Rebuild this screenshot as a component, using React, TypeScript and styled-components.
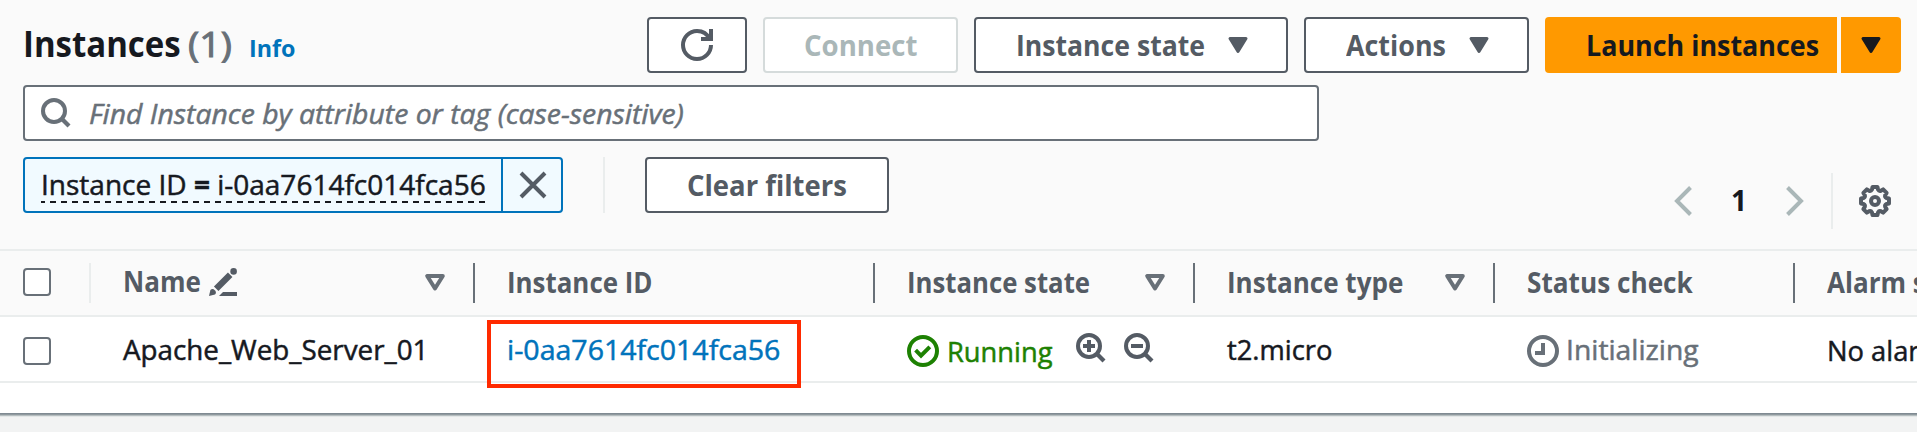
import React from "react";
import styled, { createGlobalStyle } from "styled-components";

const Global = createGlobalStyle`
  *, *::before, *::after { box-sizing: border-box; }
  body {
    margin: 0;
    background: #f2f3f3;
    color: #16191f;
    font-family: "Open Sans", "Noto Sans", sans-serif;
    overflow: hidden;
  }
`;

const Panel = styled.section`
  height: 413px;
  background: #fff;
  overflow: hidden;
`;

const PanelEdge = styled.div`
  height: 4px;
  background: linear-gradient(#7f8a92 0 1px, #8f999e 1px 2px, #b5bdbf 2px 3px, #e2e6e6 3px 4px);
`;

const Header = styled.header`
  height: 249px;
  padding: 17px 16px 0 23px;
  background: #fafafa;
`;

/* Text drawn with a narrower or wider set width than the base face. */
const Text = styled.span<{ $fit?: number; $size?: number; $bold?: boolean; $color?: string; $italic?: boolean; $stroke?: number }>`
  display: block;
  flex: none;
  font-size: ${(p) => p.$size ?? 28}px;
  line-height: 36px;
  font-weight: ${(p) => (p.$bold ? 700 : 400)};
  font-style: ${(p) => (p.$italic ? "italic" : "normal")};
  color: ${(p) => p.$color ?? "inherit"};
  -webkit-text-stroke: ${(p) => p.$stroke ?? (p.$bold ? 0 : 0.5)}px currentColor;
  white-space: nowrap;
  transform: scaleX(${(p) => p.$fit ?? 1});
  transform-origin: left center;
`;

const Strong = styled.b`
  font-weight: 700;
`;

const TitleBar = styled.div`
  display: flex;
  justify-content: space-between;
  height: 56px;
`;

const Title = styled.h2`
  display: flex;
  align-items: baseline;
  margin: 9px 0 0;
  font-weight: 400;
`;

const TitlePart = styled.div<{ $width: number }>`
  width: ${(p) => p.$width}px;
`;

const Actions = styled.div`
  display: flex;
  gap: 16px;
`;

const Button = styled.button<{ $width: number; $disabled?: boolean; $pad?: number; $left?: number }>`
  display: flex;
  align-items: center;
  justify-content: space-between;
  width: ${(p) => p.$width}px;
  height: 56px;
  padding: 0 ${(p) => p.$pad ?? 38}px 1px ${(p) => p.$left ?? p.$pad ?? 39}px;
  border: 2px solid ${(p) => (p.$disabled ? "#d5dbdb" : "#545b64")};
  border-radius: 4px;
  background: #fff;
  color: ${(p) => (p.$disabled ? "#aab7b8" : "#545b64")};
  font-family: inherit;
`;

const SplitButton = styled.div`
  display: flex;
  gap: 4px;
`;

const PrimaryButton = styled.button<{ $width: number; $side: "left" | "right" }>`
  display: flex;
  align-items: center;
  width: ${(p) => p.$width}px;
  height: 56px;
  padding: 0 0 1px ${(p) => (p.$side === "left" ? 41 : 20)}px;
  border: 0;
  border-radius: ${(p) => (p.$side === "left" ? "4px 0 0 4px" : "0 4px 4px 0")};
  background: #ff9900;
  color: #16191f;
  font-family: inherit;
`;

const SearchBox = styled.div`
  display: flex;
  align-items: center;
  gap: 18px;
  width: 1296px;
  height: 56px;
  margin-top: 12px;
  padding: 0 16px 0 16px;
  border: 2px solid #687078;
  border-radius: 4px;
  background: #fff;
  color: #687078;
`;

const FilterRow = styled.div`
  display: flex;
  margin-top: 16px;
`;

const Token = styled.div`
  display: flex;
  width: 540px;
  height: 56px;
  border: 2px solid #0073bb;
  border-radius: 4px;
  background: #f1faff;
`;

const TokenLabel = styled.div`
  width: 476px;
  padding: 7px 0 0 16px;
`;

const TokenUnderline = styled.div`
  width: 444px;
  height: 37px;
  background: repeating-linear-gradient(90deg, #16191f 0 4px, transparent 4px 9px, #16191f 9px 11px) bottom / 100% 2px no-repeat;
`;

const TokenRemove = styled.div`
  display: flex;
  align-items: center;
  justify-content: center;
  flex: 1;
  padding-left: 2px;
  border-left: 2px solid #0073bb;
  color: #545b64;
`;

const Rule = styled.div<{ $left: number; $right: number }>`
  width: 2px;
  height: 56px;
  margin: 0 ${(p) => p.$right}px 0 ${(p) => p.$left}px;
  background: #eaeded;
`;

const Pagination = styled.div`
  display: flex;
  align-items: center;
  height: 56px;
  margin: 16px 10px 0 auto;
  color: #aab7b8;
`;

const PageNumber = styled.div`
  width: 94px;
  padding: 0 0 2px 39px;
`;

const Row = styled.div<{ $head?: boolean }>`
  display: grid;
  grid-template-columns: 91px 384px 400px 320px 300px 300px 300px;
  height: ${(p) => (p.$head ? 68 : 66)}px;
  border-top: ${(p) => (p.$head ? 2 : 0)}px solid #eaeded;
  border-bottom: 2px solid #eaeded;
  background: ${(p) => (p.$head ? "#fafafa" : "#fff")};
  color: ${(p) => (p.$head ? "#545b64" : "#16191f")};
`;

const Cell = styled.div<{ $pad?: number; $down?: number; $gap?: number }>`
  display: flex;
  align-items: center;
  gap: ${(p) => p.$gap ?? 0}px;
  padding: ${(p) => p.$down ?? 0}px 0 0 ${(p) => p.$pad ?? 32}px;
  min-width: 0;
`;

const HeadCell = styled(Cell)<{ $line?: string }>`
  justify-content: space-between;
  height: 40px;
  margin-top: 12px;
  padding-right: 28px;
  padding-bottom: 2px;
  border-right: 2px solid ${(p) => p.$line ?? "#687078"};
`;

const NameHeading = styled.div`
  display: flex;
  align-items: center;
  height: 38px;
`;

const NameLabel = styled.div`
  width: 86px;
  margin-top: -3px;
`;

const Checkbox = styled.div`
  width: 28px;
  height: 28px;
  flex: none;
  border: 2px solid #687078;
  border-radius: 4px;
  background: #fff;
`;

const StatusLabel = styled.div<{ $width: number; $top?: number }>`
  width: ${(p) => p.$width}px;
  margin-top: ${(p) => p.$top ?? 0}px;
`;

const LinkCell = styled(Cell)`
  position: relative;
`;

const Highlight = styled.div`
  position: absolute;
  left: 12px;
  top: 3px;
  width: 314px;
  height: 68px;
  border: 4px solid #ff2a00;
  z-index: 1;
`;

const Svg = styled.svg`
  display: block;
  flex: none;
  overflow: visible;
`;

const ZoomIcon = styled.span`
  display: block;
  color: #545b64;
`;

const SortIcon = styled.span`
  color: #687078;
`;

const Caret = () => (
  <Svg width="20" height="16" viewBox="0 0 20 16">
    <path d="M2 1.5h16L10 14.5z" fill="currentColor" stroke="currentColor" strokeWidth="3" strokeLinejoin="round" />
  </Svg>
);

const SortCaret = () => (
  <SortIcon>
    <Svg width="20" height="17" viewBox="0 0 20 17">
      <path d="M2.2 2h15.6L10 14.5z" fill="none" stroke="currentColor" strokeWidth="4" strokeLinejoin="round" />
    </Svg>
  </SortIcon>
);

const Refresh = () => (
  <Svg width="32" height="32" viewBox="0 0 16 16" fill="none" stroke="currentColor" strokeWidth="2">
    <path d="M10 5h5V0" />
    <path d="M15 8a7 7 0 0 1-7 7 7 7 0 0 1-7-7 7 7 0 0 1 7-7 6.9 6.9 0 0 1 6.3 4" />
  </Svg>
);

const Lens = ({ sign }: { sign?: "plus" | "minus" }) => (
  <Svg width="30" height="30" viewBox="0 0 30 30" fill="none" stroke="currentColor" strokeWidth="4">
    <circle cx="13" cy="13" r="11" />
    <path d="M20.5 20.5L28 28" strokeWidth="4.2" />
    {sign && <path d={sign === "plus" ? "M7 13h12M13 7v12" : "M7 13h12"} />}
  </Svg>
);

const Close = () => (
  <Svg width="28" height="28" viewBox="0 0 28 28" fill="none" stroke="currentColor" strokeWidth="4">
    <path d="M2 2l24 24M26 2L2 26" />
  </Svg>
);

const Chevron = ({ dir }: { dir: "left" | "right" }) => (
  <Svg width="18" height="30" viewBox="0 0 18 30" fill="none" stroke="currentColor" strokeWidth="4">
    <path d={dir === "left" ? "M16.5 1.5L3 15l13.5 13.5" : "M1.5 1.5L15 15 1.5 28.5"} />
  </Svg>
);

const gearPoint = (deg: number, r: number) => {
  const a = (deg * Math.PI) / 180;
  return `${(16 + r * Math.sin(a)).toFixed(2)} ${(16 - r * Math.cos(a)).toFixed(2)}`;
};

const gearPath =
  "M" +
  Array.from({ length: 8 }, (_, i) => {
    const c = i * 45;
    return `${gearPoint(c - 10, 14.2)}L${gearPoint(c + 10, 14.2)}L${gearPoint(c + 15, 11.8)}Q${gearPoint(c + 22.5, 10.4)} ${gearPoint(c + 30, 11.8)}`;
  }).join("L") +
  "Z";

const Gear = () => (
  <Svg width="32" height="32" viewBox="0 0 32 32" fill="none" stroke="#545b64" strokeWidth="4" strokeLinejoin="round">
    <path d={gearPath} />
    <circle cx="16" cy="16" r="4" />
  </Svg>
);

const Pencil = () => (
  <Svg width="28" height="28" viewBox="0 0 28 28" fill="currentColor">
    <circle cx="24.6" cy="3.4" r="3.3" />
    <path d="M7.2 20.8L21.2 6.8" stroke="currentColor" strokeWidth="6.4" />
    <path d="M0 28l1.4-6q2.2-2 4.4.2t.2 4.4z" />
    <path d="M10 28l4-4h14v4z" />
  </Svg>
);

const CheckCircle = () => (
  <Svg width="32" height="32" viewBox="0 0 16 16" fill="none" stroke="#1d8102" strokeWidth="2">
    <circle cx="8" cy="8" r="7" />
    <path d="M4.3 7.6L7 10.3 11.4 5.9" />
  </Svg>
);

const Clock = () => (
  <Svg width="32" height="32" viewBox="0 0 16 16" fill="none" stroke="#687078" strokeWidth="2">
    <circle cx="8" cy="8" r="7" />
    <path d="M8 4v5H4" />
  </Svg>
);

export default function App() {
  return (
    <>
      <Global />
      <Panel>
        <Header>
          <TitleBar>
            <Title>
              <TitlePart $width={165}>
                <Text $bold $size={35} $fit={0.942}>Instances</Text>
              </TitlePart>
              <TitlePart $width={61}>
                <Text $size={35} $fit={1.08} $stroke={1} $color="#687078">(1)</Text>
              </TitlePart>
              <TitlePart $width={50}>
                <Text $bold $size={24} $fit={0.97} $color="#0073bb">Info</Text>
              </TitlePart>
            </Title>
            <Actions>
              <Button $width={100} $pad={32}><Refresh /></Button>
              <Button $width={195} $disabled>
                <Text $bold $fit={0.985}>Connect</Text>
              </Button>
              <Button $width={314} $left={40}>
                <Text $bold $fit={0.95}>Instance state</Text>
                <Caret />
              </Button>
              <Button $width={225} $left={40}>
                <Text $bold $fit={0.96}>Actions</Text>
                <Caret />
              </Button>
              <SplitButton>
                <PrimaryButton $width={292} $side="left">
                  <Text $bold $fit={0.96}>Launch instances</Text>
                </PrimaryButton>
                <PrimaryButton $width={60} $side="right"><Caret /></PrimaryButton>
              </SplitButton>
            </Actions>
          </TitleBar>
          <SearchBox>
            <Lens />
            <Text $italic $fit={1.013}>Find Instance by attribute or tag (case-sensitive)</Text>
          </SearchBox>
          <FilterRow>
            <Token>
              <TokenLabel>
                <TokenUnderline>
                  <Text $fit={1}>Instance ID <Strong>=</Strong> i-0aa7614fc014fca56</Text>
                </TokenUnderline>
              </TokenLabel>
              <TokenRemove><Close /></TokenRemove>
            </Token>
            <Rule $left={40} $right={40} />
            <Button $width={244} $pad={40}>
              <Text $bold $fit={0.98}>Clear filters</Text>
            </Button>
            <Pagination>
              <Chevron dir="left" />
              <PageNumber>
                <Text $bold $color="#16191f">1</Text>
              </PageNumber>
              <Chevron dir="right" />
              <Rule $left={27} $right={26} />
              <Gear />
            </Pagination>
          </FilterRow>
        </Header>
        <Row $head>
          <HeadCell $pad={23} $line="#eaeded"><Checkbox /></HeadCell>
          <HeadCell $pad={32}>
            <NameHeading>
              <NameLabel><Text $bold $fit={0.93}>Name</Text></NameLabel>
              <Pencil />
            </NameHeading>
            <SortCaret />
          </HeadCell>
          <HeadCell $pad={32}><Text $bold $fit={0.925}>Instance ID</Text></HeadCell>
          <HeadCell $pad={32}>
            <Text $bold $fit={0.92}>Instance state</Text>
            <SortCaret />
          </HeadCell>
          <HeadCell $pad={32}>
            <Text $bold $fit={0.93}>Instance type</Text>
            <SortCaret />
          </HeadCell>
          <HeadCell $pad={32}><Text $bold $fit={0.935}>Status check</Text></HeadCell>
          <HeadCell $pad={32}><Text $bold $fit={0.93}>Alarm status</Text></HeadCell>
        </Row>
        <Row>
          <Cell $pad={23} $down={4}><Checkbox /></Cell>
          <Cell $pad={32}><Text $fit={0.992}>Apache_Web_Server_01</Text></Cell>
          <LinkCell $pad={32}>
            <Highlight />
            <Text $fit={1.018} $color="#0073bb">i-0aa7614fc014fca56</Text>
          </LinkCell>
          <Cell $pad={32} $down={3} $gap={8}>
            <CheckCircle />
            <StatusLabel $width={121}><Text $fit={0.975} $color="#1d8102">Running</Text></StatusLabel>
            <StatusLabel $width={40} $top={-5}><ZoomIcon><Lens sign="plus" /></ZoomIcon></StatusLabel>
            <StatusLabel $width={40} $top={-5}><ZoomIcon><Lens sign="minus" /></ZoomIcon></StatusLabel>
          </Cell>
          <Cell $pad={32}><Text $fit={0.975}>t2.micro</Text></Cell>
          <Cell $pad={32} $down={3} $gap={7}>
            <Clock />
            <StatusLabel $width={150} $top={-4}><Text $fit={1.01} $color="#687078">Initializing</Text></StatusLabel>
          </Cell>
          <Cell $pad={32} $down={2}><Text $fit={0.975}>No alarms</Text></Cell>
        </Row>
      </Panel>
      <PanelEdge />
    </>
  );
}
